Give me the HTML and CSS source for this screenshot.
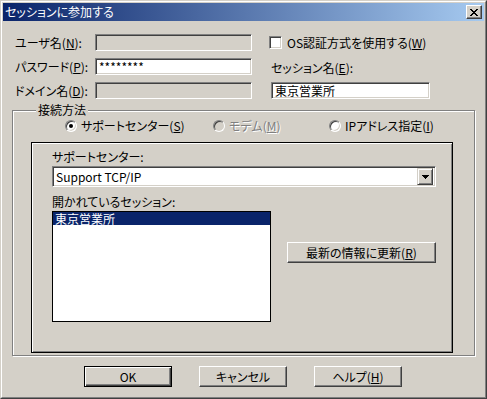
FILE: index.html
```html
<!DOCTYPE html>
<html lang="ja">
<head>
    <meta charset="UTF-8">
    <title>セッションに参加する</title>
    <link rel="stylesheet" href="styles.css">
</head>
<body>
    <div class="window">
        <div class="window-frame">
            <div class="titlebar">
                <span class="title">セッションに参加する</span>
                <button class="close-btn">
                    <svg width="8" height="7" viewBox="0 0 8 7" shape-rendering="crispEdges">
                        <path d="M0 0h2v1h-2z M6 0h2v1h-2z M1 1h2v1h-2z M5 1h2v1h-2z M2 2h4v1h-4z M3 3h2v1h-2z M2 4h4v1h-4z M1 5h2v1h-2z M5 5h2v1h-2z M0 6h2v1h-2z M6 6h2v1h-2z" fill="#000"/>
                    </svg>
                </button>
            </div>

            <div class="content">
                <!-- ログイン情報 -->
                <div class="login-grid">
                    <label class="field-label">ユーザ名(<u>N</u>):</label>
                    <div class="textbox disabled"></div>
                    <label class="check-row">
                        <span class="checkbox"></span>
                        <span>OS認証方式を使用する(<u>W</u>)</span>
                    </label>

                    <label class="field-label">パスワード(<u>P</u>):</label>
                    <div class="textbox">********</div>
                    <label class="field-label right-label">セッション名(<u>E</u>):</label>

                    <label class="field-label">ドメイン名(<u>D</u>):</label>
                    <div class="textbox disabled"></div>
                    <div class="textbox session-box">東京営業所</div>
                </div>

                <fieldset class="group">
                    <legend>接続方法</legend>
                    <div class="radio-row">
                        <label class="radio-item">
                            <span class="radio checked"></span>
                            <span>サポートセンター(<u>S</u>)</span>
                        </label>
                        <label class="radio-item disabled-text">
                            <span class="radio disabled"></span>
                            <span>モデム(<u>M</u>)</span>
                        </label>
                        <label class="radio-item">
                            <span class="radio"></span>
                            <span>IPアドレス指定(<u>I</u>)</span>
                        </label>
                    </div>

                    <div class="panel">
                        <div class="panel-label">サポートセンター:</div>
                        <div class="combo">
                            <span class="combo-text">Support TCP/IP</span>
                            <span class="combo-btn">
                                <svg width="7" height="4" viewBox="0 0 7 4" shape-rendering="crispEdges">
                                    <path d="M0 0h7v1h-7z M1 1h5v1h-5z M2 2h3v1h-3z M3 3h1v1h-1z" fill="#000"/>
                                </svg>
                            </span>
                        </div>
                        <div class="panel-label sessions-label">開かれているセッション:</div>
                        <div class="session-row">
                            <div class="listbox">
                                <div class="list-item selected">東京営業所</div>
                            </div>
                            <button class="btn refresh-btn">最新の情報に更新(<u>R</u>)</button>
                        </div>
                    </div>
                </fieldset>

                <div class="dialog-buttons">
                    <button class="btn default-btn">OK</button>
                    <button class="btn">キャンセル</button>
                    <button class="btn">ヘルプ(<u>H</u>)</button>
                </div>
            </div>
        </div>
    </div>
</body>
</html>
```

FILE: styles.css
```css
* {
    box-sizing: border-box;
}

body {
    margin: 0;
    background-color: #d4d0c8;
    font-family: "Noto Sans CJK JP", "Noto Sans", sans-serif;
    font-size: 12px;
    font-feature-settings: "palt";
    color: #000;
}

u {
    text-decoration-thickness: 1px;
    text-underline-offset: 1px;
}

.window {
    width: 487px;
    height: 399px;
    background-color: #d4d0c8;
    border: 1px solid;
    border-color: #d4d0c8 #404040 #404040 #d4d0c8;
}

.window-frame {
    height: 100%;
    border: 1px solid;
    border-color: #fff #808080 #808080 #fff;
    padding: 1px;
    display: flex;
    flex-direction: column;
}

.titlebar {
    height: 18px;
    flex-shrink: 0;
    background: linear-gradient(to right, #0a246a, #a6caf0);
    display: flex;
    align-items: center;
    justify-content: space-between;
    padding: 0 2px 0 2px;
}

.title {
    color: #fff;
    line-height: 18px;
}

.close-btn {
    width: 16px;
    height: 14px;
    padding: 0;
    background-color: #d4d0c8;
    border: 1px solid;
    border-color: #fff #404040 #404040 #fff;
    box-shadow: inset -1px -1px #808080;
    display: flex;
    align-items: center;
    justify-content: center;
}

.close-btn svg {
    display: block;
}

.content {
    padding: 13px 9px 0 9px;
}

/* 上段のフォーム */
.login-grid {
    margin-left: 3px;
    display: grid;
    grid-template-columns: 80px 157px 179px;
    grid-auto-rows: 17px;
    row-gap: 7px;
}

.field-label {
    line-height: 17px;
    white-space: nowrap;
}

.right-label {
    margin-left: 19px;
    align-self: end;
    line-height: 14px;
}

.textbox {
    height: 17px;
    background-color: #fff;
    border: 1px solid;
    border-color: #808080 #fff #fff #808080;
    box-shadow: inset 1px 1px #404040, inset -1px -1px #d4d0c8;
    padding: 0 3px;
    line-height: 15px;
    white-space: nowrap;
}

.textbox.disabled {
    background-color: #d4d0c8;
}

.session-box {
    margin-left: 19px;
    width: 159px;
}

.check-row {
    margin-left: 17px;
    display: flex;
    align-items: center;
    gap: 5px;
    white-space: nowrap;
}

.checkbox {
    width: 13px;
    height: 13px;
    flex-shrink: 0;
    background-color: #fff;
    border: 1px solid;
    border-color: #808080 #fff #fff #808080;
    box-shadow: inset 1px 1px #404040, inset -1px -1px #d4d0c8;
}

/* 接続方法 */
.group {
    margin: 4px 0 0 0;
    padding: 2px 21px 2px 18px;
    width: 463px;
    border: 1px solid #808080;
    box-shadow: inset 1px 1px #fff, 1px 1px #fff;
}

.group legend {
    margin-left: 5px;
    padding: 0 2px;
    line-height: 14px;
    background-color: #d4d0c8;
}

.radio-row {
    display: grid;
    grid-template-columns: 148px 116px auto;
    padding-left: 34px;
}

.radio-item {
    display: flex;
    align-items: center;
    gap: 4px;
    line-height: 13px;
    white-space: nowrap;
}

.radio {
    width: 12px;
    height: 12px;
    flex-shrink: 0;
    border-radius: 50%;
    background-color: #fff;
    border: 1px solid;
    border-color: #808080 #fff #fff #808080;
    box-shadow: inset 1px 1px #404040, inset -1px -1px #d4d0c8;
    display: flex;
    align-items: center;
    justify-content: center;
}

.radio.checked::after {
    content: "";
    width: 4px;
    height: 4px;
    border-radius: 50%;
    background-color: #000;
}

.radio.disabled {
    background-color: #d4d0c8;
}

.disabled-text {
    color: #808080;
    text-shadow: 1px 1px 0 #fff;
}

.panel {
    margin-top: 10px;
    width: 422px;
    height: 211px;
    border: 1px solid #000;
    box-shadow: inset 1px 1px #fff, inset -1px -1px #808080;
    padding: 7px 16px 0 20px;
}

.panel-label {
    line-height: 14px;
}

.combo {
    margin-top: 2px;
    height: 21px;
    background-color: #fff;
    border: 1px solid;
    border-color: #808080 #fff #fff #808080;
    box-shadow: inset 1px 1px #404040, inset -1px -1px #d4d0c8;
    display: flex;
    align-items: center;
    justify-content: space-between;
    padding: 2px;
}

.combo-text {
    padding-left: 1px;
    line-height: 17px;
}

.combo-btn {
    width: 16px;
    height: 17px;
    background-color: #d4d0c8;
    border: 1px solid;
    border-color: #d4d0c8 #404040 #404040 #d4d0c8;
    box-shadow: inset 1px 1px #fff, inset -1px -1px #808080;
    display: flex;
    align-items: center;
    justify-content: center;
}

.sessions-label {
    margin-top: 8px;
}

.session-row {
    margin-top: 2px;
    display: flex;
    align-items: flex-start;
    gap: 16px;
}

.listbox {
    width: 220px;
    height: 111px;
    background-color: #fff;
    border: 1px solid #000;
}

.list-item {
    height: 13px;
    line-height: 13px;
    padding-left: 2px;
}

.list-item.selected {
    background-color: #0a246a;
    color: #fff;
}

.btn {
    height: 21px;
    padding: 0;
    font-family: inherit;
    font-size: 12px;
    font-feature-settings: "palt";
    color: #000;
    background-color: #d4d0c8;
    border: 1px solid;
    border-color: #fff #404040 #404040 #fff;
    box-shadow: inset -1px -1px #808080;
    width: 88px;
}

.refresh-btn {
    width: 150px;
    margin-top: 31px;
}

.default-btn {
    border: 1px solid #000;
    box-shadow: inset 1px 1px #fff, inset -1px -1px #404040, inset -2px -2px #808080;
}

.dialog-buttons {
    margin-top: 10px;
    padding-left: 72px;
    display: flex;
    gap: 27px;
}
```
